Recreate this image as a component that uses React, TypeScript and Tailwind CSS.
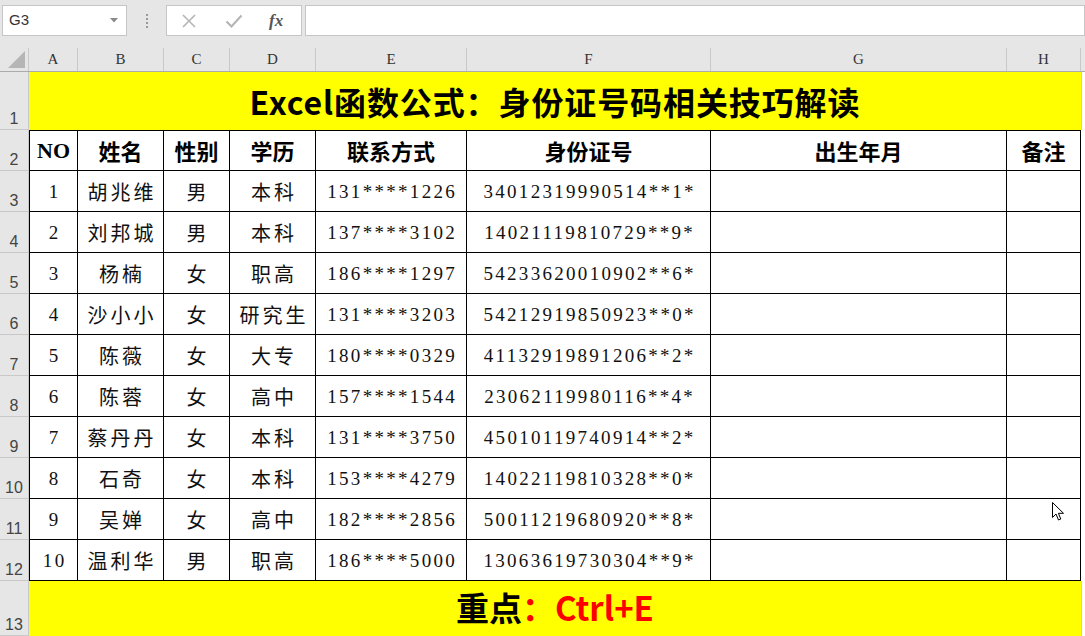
import React from "react";

const cols = [
  { k: "A", w: 49 },
  { k: "B", w: 86 },
  { k: "C", w: 66 },
  { k: "D", w: 86 },
  { k: "E", w: 151 },
  { k: "F", w: 244 },
  { k: "G", w: 296 },
  { k: "H", w: 74 },
];

const data: string[][] = [
  ["1", "胡兆维", "男", "本科", "131****1226", "34012319990514**1*"],
  ["2", "刘邦城", "男", "本科", "137****3102", "14021119810729**9*"],
  ["3", "杨楠", "女", "职高", "186****1297", "54233620010902**6*"],
  ["4", "沙小小", "女", "研究生", "131****3203", "54212919850923**0*"],
  ["5", "陈薇", "女", "大专", "180****0329", "41132919891206**2*"],
  ["6", "陈蓉", "女", "高中", "157****1544", "23062119980116**4*"],
  ["7", "蔡丹丹", "女", "本科", "131****3750", "45010119740914**2*"],
  ["8", "石奇", "女", "本科", "153****4279", "14022119810328**0*"],
  ["9", "吴婵", "女", "高中", "182****2856", "50011219680920**8*"],
  ["10", "温利华", "男", "职高", "186****5000", "13063619730304**9*"],
];

const serif = { fontFamily: '"Liberation Serif", "Noto Sans CJK SC", serif' };
const cjk = { fontFamily: '"Noto Sans CJK SC", "Liberation Sans", sans-serif' };

function RowHead({ n, h }: { n: number; h: string }) {
  return (
    <div
      className={`w-[29px] ${h} shrink-0 bg-[#e6e6e6] border-r border-b border-[#c8c8c8] flex items-end justify-center pb-[2px] text-[16px] leading-none text-[#444]`}
      style={{ fontFamily: '"Liberation Sans", sans-serif' }}
    >
      {n}
    </div>
  );
}

export default function App() {
  return (
    <div className="w-[1085px] h-[636px] overflow-hidden bg-white relative" style={cjk}>
      {/* Formula bar */}
      <div className="h-[48px] bg-[#e6e6e6] flex items-start pt-[5px]">
        <div className="ml-[2px] w-[125px] h-[31px] bg-white border border-[#c6c6c6] flex items-center justify-between pl-[6px] pr-[7px]">
          <span className="text-[15px] text-[#333]" style={{ fontFamily: '"Liberation Sans", sans-serif' }}>G3</span>
          <svg width="8" height="5" viewBox="0 0 8 5" className="mr-[1px]">
            <path d="M0 0 L8 0 L4 4.5 Z" fill="#8a8a8a" />
          </svg>
        </div>
        <div className="w-[39px] h-[31px] flex flex-col items-center justify-center gap-[2px]">
          <span className="w-[2px] h-[2px] bg-[#9a9a9a]" />
          <span className="w-[2px] h-[2px] bg-[#9a9a9a]" />
          <span className="w-[2px] h-[2px] bg-[#9a9a9a]" />
          <span className="w-[2px] h-[2px] bg-[#9a9a9a]" />
        </div>
        <div className="w-[136px] h-[31px] bg-white border border-[#c6c6c6] flex items-center">
          <svg width="16" height="16" viewBox="0 0 16 16" className="ml-[14px]">
            <path d="M2 2 L14 14 M14 2 L2 14" stroke="#b5b5b5" strokeWidth="1.6" fill="none" />
          </svg>
          <svg width="18" height="16" viewBox="0 0 18 16" className="ml-[28px]">
            <path d="M1.5 8.5 L6.5 13.5 L16.5 2.5" stroke="#b5b5b5" strokeWidth="2.2" fill="none" />
          </svg>
          <span
            className="ml-[26px] text-[17px] italic font-bold text-[#555] leading-none"
            style={{ fontFamily: '"Liberation Serif", serif' }}
          >
            fx
          </span>
        </div>
        <div className="ml-[3px] flex-1 h-[31px] bg-white border border-[#c6c6c6]" />
      </div>

      {/* Column headers */}
      <div className="flex h-[24px] bg-[#e6e6e6] border-b border-[#ababab]">
        <div className="w-[29px] shrink-0 border-r border-[#c8c8c8] flex items-end justify-end pr-[3px] pb-[3px]">
          <svg width="17" height="17" viewBox="0 0 17 17">
            <path d="M17 0 L17 17 L0 17 Z" fill="#b5b5b5" />
          </svg>
        </div>
        {cols.map((c) => (
          <div
            key={c.k}
            className="shrink-0 border-r border-[#c8c8c8] flex items-center justify-center text-[15px] text-[#333]"
            style={{ width: c.w, ...serif }}
          >
            {c.k}
          </div>
        ))}
        <div className="flex-1" />
      </div>

      {/* Row 1 title */}
      <div className="flex h-[58px]">
        <RowHead n={1} h="h-[58px]" />
        <div className="w-[1052px] shrink-0 bg-[#ffff00] flex items-center justify-center">
          <span className="text-[32px] font-bold text-black leading-none tracking-[0.9px]">
            Excel函数公式：身份证号码相关技巧解读
          </span>
        </div>
        <div className="flex-1 border-l border-[#d0d0d0]" />
      </div>

      {/* Row 2 header */}
      <div className="flex h-[41px]">
        <RowHead n={2} h="h-[41px]" />
        <div className="flex w-[1052px] shrink-0 border-t border-l border-black h-[41px]">
          {["NO", "姓名", "性别", "学历", "联系方式", "身份证号", "出生年月", "备注"].map((t, i) => (
            <div
              key={t}
              className="shrink-0 border-r border-b border-black flex items-center justify-center text-[22px] font-bold text-black"
              style={{ width: i === 0 ? cols[i].w - 1 : cols[i].w, ...(i === 0 ? serif : cjk) }}
            >
              {t}
            </div>
          ))}
        </div>
        <div className="flex-1" />
      </div>

      {/* Data rows */}
      {data.map((r, ri) => (
        <div key={ri} className="flex h-[41px]">
          <RowHead n={ri + 3} h="h-[41px]" />
          <div className="flex w-[1052px] shrink-0 border-l border-black h-[41px]">
            {cols.map((c, i) => {
              const v = r[i] ?? "";
              const isNum = i === 0 || i === 4 || i === 5;
              return (
                <div
                  key={c.k}
                  className={`shrink-0 border-r border-b border-black flex items-center justify-center pt-[2px] text-[#111] ${
                    isNum ? "text-[19px] tracking-[2.3px]" : "text-[20px] tracking-[3px]"
                  }`}
                  style={{ width: i === 0 ? c.w - 1 : c.w, ...(isNum ? serif : cjk) }}
                >
                  <span className={isNum ? "mr-[-2.3px]" : "mr-[-3px]"}>{v}</span>
                </div>
              );
            })}
          </div>
          <div className="flex-1" />
        </div>
      ))}

      {/* Row 13 */}
      <div className="flex h-[55px]">
        <RowHead n={13} h="h-[55px]" />
        <div className="w-[1052px] shrink-0 bg-[#ffff00] flex items-start justify-center pt-[10px]">
          <span className="text-[33px] font-bold leading-none">
            <span className="text-black">重点</span>
            <span className="text-[#ff0000]">：Ctrl+E</span>
          </span>
        </div>
        <div className="flex-1 border-l border-[#d0d0d0]" />
      </div>

      {/* Mouse cursor */}
      <svg
        className="absolute left-[1052px] top-[502px]"
        width="13"
        height="20"
        viewBox="0 0 13 20"
      >
        <path
          d="M0.5 0.5 L0.5 15.5 L4 12 L6.5 18 L8.8 17 L6.4 11.3 L11.5 11.3 Z"
          fill="white"
          stroke="black"
          strokeWidth="1"
          strokeLinejoin="round"
        />
      </svg>
    </div>
  );
}
